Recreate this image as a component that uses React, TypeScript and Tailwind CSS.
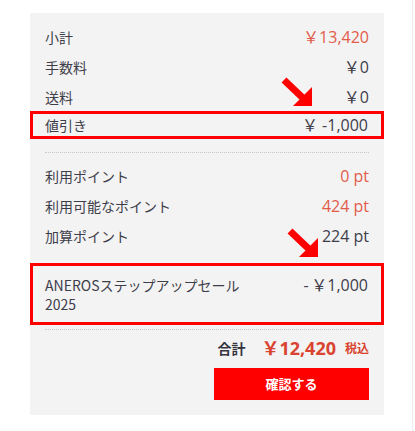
import React from "react";

const font = { fontFamily: '"Noto Sans CJK JP", "Noto Sans", sans-serif' };
const num = { fontFamily: '"Open Sans", "Noto Sans CJK JP", sans-serif' };

function Arrow({ className }: { className: string }) {
  return (
    <svg className={className} width="36" height="36" viewBox="0 0 36 36">
      <line x1="4" y1="4" x2="25" y2="24" stroke="#ff0000" strokeWidth="7" />
      <polygon points="32,11 32,30 13,30" fill="#ff0000" />
    </svg>
  );
}

function Row({ label, value, red }: { label: string; value: string; red?: boolean }) {
  return (
    <div className="flex h-[30px] items-center justify-between">
      <span className="text-[14px] text-[#3e3e4a]">{label}</span>
      <span className={`text-[16px] ${red ? "text-[#e25c4a]" : "text-[#3e3e4a]"}`} style={num}>
        {value}
      </span>
    </div>
  );
}

export default function App() {
  return (
    <div className="h-[431px] w-[415px] bg-white" style={font}>
      <div className="h-[431px] w-[413px] border-r border-[#ececec] pt-[13px] pl-[30px]">
        <div className="relative w-[354px] bg-[#f3f3f3] pt-[9px] pb-[15px]">
          <div className="px-[15px]">
            <Row label="小計" value="￥13,420" red />
            <Row label="手数料" value="￥0" />
            <Row label="送料" value="￥0" />
          </div>
          <div className="-mt-px flex h-[28px] items-center justify-between border-[3px] border-[#ff0000] pr-[13px] pl-[12px]">
            <span className="text-[14px] text-[#3e3e4a]">値引き</span>
            <span className="text-[16px] text-[#3e3e4a]" style={num}>
              ￥ -1,000
            </span>
          </div>
          <div className="mx-[15px] mt-[13px] border-t border-dotted border-[#c8c8c8]" />
          <div className="px-[15px] pt-[8px] pb-[12px]">
            <Row label="利用ポイント" value="0 pt" red />
            <Row label="利用可能なポイント" value="424 pt" red />
            <Row label="加算ポイント" value="224 pt" />
          </div>
          <div className="flex items-start justify-between border-[3px] border-[#ff0000] pt-[10px] pr-[13px] pb-[8px] pl-[12px]">
            <span className="w-[200px] text-[14px] leading-[19px] text-[#3e3e4a]">
              ANEROSステップアップセール 2025
            </span>
            <span className="text-[16px] leading-[19px] text-[#3e3e4a]" style={num}>
              -&thinsp;￥1,000
            </span>
          </div>
          <div className="mx-[15px] mt-[4px] border-t border-dotted border-[#c8c8c8]" />
          <div className="flex h-[36px] items-center justify-end px-[15px]">
            <span className="text-[14px] font-bold text-[#35353f]">合計</span>
            <span className="ml-[16px] text-[18px] font-bold text-[#d9432f]" style={num}>
              ￥12,420
            </span>
            <span className="ml-[9px] text-[12px] font-bold text-[#d9432f]">税込</span>
          </div>
          <div className="flex justify-end px-[15px] pt-[2px]">
            <button className="flex h-[32px] w-[155px] items-center justify-center bg-[#ff0000] text-[13px] font-bold text-white">
              確認する
            </button>
          </div>
          <Arrow className="absolute left-[250px] top-[63px]" />
          <Arrow className="absolute left-[256px] top-[214px]" />
        </div>
      </div>
    </div>
  );
}
